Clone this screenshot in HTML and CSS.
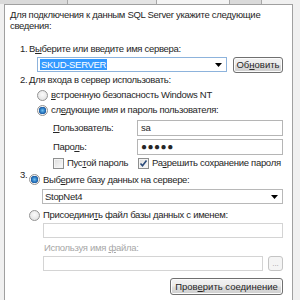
FILE: index.html
```html
<!DOCTYPE html>
<html lang="ru">
    <head>
        <title>Свойства связи с данными</title>
        <meta charset="UTF-8">
        <meta name="viewport" content="width=device-width, initial-scale=1">
        <link rel="stylesheet" href="styles.css">
    </head>
    <body>
        <div class="tabs">
            <i class="tab t1"></i>
            <i class="tab t2"></i>
            <i class="tab t3"></i>
            <i class="tab t4"></i>
        </div>
        <div class="panel">
            <p class="intro">Для подключения к данным SQL Server укажите следующие сведения:</p>

            <div class="row step1">
                <span class="num">1.</span><span>В<u>ы</u>берите или введите имя сервера:</span>
            </div>
            <div class="row combo-row">
                <div class="combo focus server">
                    <span class="sel">SKUD-SERVER</span>
                    <svg class="arrow" width="7" height="4" viewBox="0 0 7 4"><path d="M0 0h7L3.5 4z" fill="#000"/></svg>
                </div>
                <button class="btn refresh">Об<u>н</u>овить</button>
            </div>

            <div class="row step2">
                <span class="num">2.</span><span>Для входа в сервер использовать:</span>
            </div>
            <div class="row opt r1">
                <i class="radio"></i><span><u>в</u>строенную безопасность Windows NT</span>
            </div>
            <div class="row opt r2">
                <i class="radio on"></i><span>сл<u>е</u>дующие имя и пароль пользователя:</span>
            </div>
            <div class="row field user">
                <span class="lbl"><u>П</u>ользователь:</span>
                <div class="input focus">sa</div>
            </div>
            <div class="row field pass">
                <span class="lbl">Паро<u>л</u>ь:</span>
                <div class="input focus dots">●●●●●</div>
            </div>
            <div class="row checks">
                <i class="check"></i><span class="ctext">Пус<u>т</u>ой пароль</span>
                <i class="check on"><svg width="9" height="9" viewBox="0 0 9 9"><path d="M1.5 4.5l2 2.2L7.5 1.5" fill="none" stroke="#2a4a7a" stroke-width="1.6"/></svg></i><span>Ра<u>з</u>решить сохранение пароля</span>
            </div>

            <div class="row step3">
                <span class="num three">3.</span>
                <i class="radio on"></i><span>Выб<u>е</u>рите базу данных на сервере:</span>
            </div>
            <div class="row combo-row2">
                <div class="combo db">
                    <span>StopNet4</span>
                    <svg class="arrow" width="7" height="4" viewBox="0 0 7 4"><path d="M0 0h7L3.5 4z" fill="#000"/></svg>
                </div>
            </div>
            <div class="row r4">
                <i class="radio"></i><span>Присоедини<u>т</u>ь файл базы данных с именем:</span>
            </div>
            <div class="row attach">
                <div class="input off wide"></div>
            </div>
            <div class="row hint">
                <span>Используя имя <u>ф</u>айла:</span>
            </div>
            <div class="row attach2">
                <div class="input off name"></div>
                <button class="btn small" disabled>...</button>
            </div>
            <div class="row test">
                <button class="btn testbtn">Пров<u>е</u>рить соединение</button>
            </div>
        </div>
    </body>
</html>
```
FILE: styles.css
```css
*{
    margin: 0;
    padding: 0;
    box-sizing: border-box;
}
body {
    width: 300px;
    height: 300px;
    overflow: hidden;
    background: #f0f0f0;
    font: 9.5px "Liberation Sans", "DejaVu Sans", sans-serif;
    letter-spacing: -0.3px;
    color: #262626;
}
u {
    text-decoration: underline;
}
.tabs {
    height: 4px;
    display: flex;
}
.tab {
    display: block;
    height: 4px;
    border-right: 1px solid #a8a8a8;
}
.t1 { width: 68px; background: #dadada; }
.t2 { width: 89px; background: #e4e4e4; }
.t3 { width: 73px; background: #f4f4f4; }
.t4 { width: 32px; background: #dadada; }
.panel {
    margin-left: 4px;
    width: 289px;
    height: 296px;
    background: #fff;
    border: 1px solid #a0a0a0;
    border-bottom: none;
    padding-left: 5px;
}
.intro {
    margin-top: 4px;
    line-height: 11px;
    width: 268px;
}
.row {
    display: flex;
    align-items: center;
    height: 12px;
    line-height: 12px;
    white-space: nowrap;
}
.num {
    margin-left: 10px;
    width: 9px;
}
.step1 { margin-top: 12px; }
.combo-row {
    margin-top: 2px;
    height: 16px;
    align-items: flex-start;
}
.combo {
    height: 15px;
    border: 1px solid #b5b5b5;
    background: #fff;
    display: flex;
    align-items: center;
    justify-content: space-between;
    padding: 0 4px 0 2px;
}
.focus {
    border-color: #8db3dc;
}
.server {
    margin-left: 27px;
    width: 190px;
}
.sel {
    background: #3399ff;
    color: #fff;
    line-height: 11px;
    padding: 0 1px;
}
.btn {
    font: inherit;
    color: #262626;
    border: 1px solid #707070;
    border-radius: 3px;
    background: linear-gradient(#f2f2f2 0, #ebebeb 48%, #dddddd 52%, #cfcfcf 100%);
    box-shadow: inset 0 0 0 1px #fcfcfc;
}
.refresh {
    margin-left: 6px;
    width: 50px;
    height: 16px;
}
.step2 { margin-top: 1px; }
.opt { margin-top: 3px; }
.radio {
    display: block;
    width: 11px;
    height: 11px;
    border-radius: 50%;
    border: 1px solid #949494;
    background: radial-gradient(circle at 50% 40%, #fbfbfb, #dcdcdc);
    margin-right: 3px;
    flex: none;
}
.radio.on {
    background: radial-gradient(circle, #6fc0f0 0, #2a78c0 2.5px, #1d5aa0 3.5px, #f4f4f4 4px, #dcdcdc 100%);
}
.opt .radio {
    margin-left: 27px;
}
.field {
    height: 16px;
}
.user { margin-top: 4px; }
.pass { margin-top: 3px; }
.lbl {
    margin-left: 43px;
    width: 84px;
}
.input {
    height: 16px;
    border: 1px solid #b5b5b5;
    background: #fff;
    padding-left: 3px;
    line-height: 14px;
}
.field .input {
    width: 146px;
}
.dots {
    font-size: 10px;
    letter-spacing: 0.5px;
}
.checks { margin-top: 2px; }
.check {
    display: block;
    width: 11px;
    height: 11px;
    border: 1px solid #8e8f8f;
    background: linear-gradient(135deg, #dcdcdc, #fbfbfb);
    box-shadow: inset 0 0 0 1px #f4f4f4;
    margin-right: 3px;
    flex: none;
}
.check svg {
    display: block;
    margin: 0;
}
.checks .check:first-child {
    margin-left: 43px;
}
.ctext {
    width: 71px;
}
.step3 {
    margin-top: 1px;
    height: 16px;
    align-items: flex-end;
}
.three {
    align-self: flex-start;
    margin-top: -1px;
}
.step3 .radio {
    margin-left: 0;
    margin-bottom: 1px;
}
.combo-row2 {
    margin-top: 3px;
    height: 15px;
}
.db {
    margin-left: 32px;
    width: 241px;
    border-color: #b8b8b8;
}
.r4 {
    margin-top: 5px;
}
.r4 .radio {
    margin-left: 19px;
}
.attach {
    margin-top: 2px;
    height: 15px;
}
.off {
    border-color: #d4d4d4;
    height: 15px;
}
.wide {
    margin-left: 33px;
    width: 240px;
}
.hint {
    margin-top: 4px;
    color: #a7a7a7;
    padding-left: 34px;
}
.attach2 {
    margin-top: 2px;
    height: 15px;
}
.name {
    margin-left: 33px;
    width: 220px;
}
.small {
    margin-left: 5px;
    width: 15px;
    height: 15px;
    border-color: #c4c4c4;
    background: #f4f4f4;
    color: #a0a0a0;
    font-size: 8px;
    line-height: 10px;
    box-shadow: none;
}
.test {
    margin-top: 7px;
    height: 17px;
}
.testbtn {
    margin-left: 160px;
    width: 113px;
    height: 17px;
}
```
